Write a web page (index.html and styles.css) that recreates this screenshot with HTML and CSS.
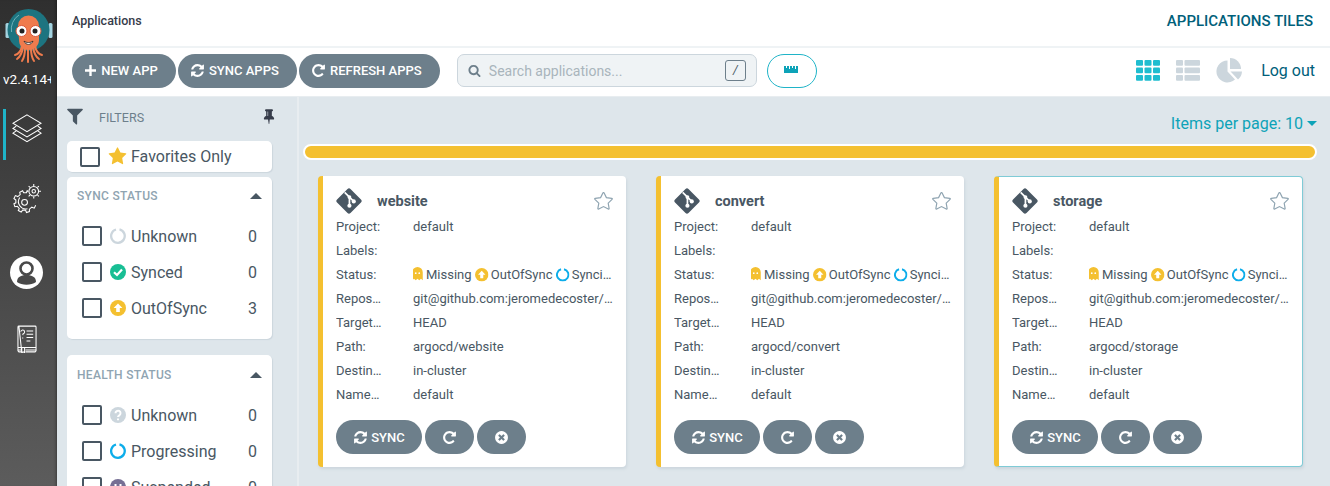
FILE: index.html
```html
<!DOCTYPE html>
<html lang="en">
<head>
    <meta charset="UTF-8">
    <title>Applications</title>
    <link rel="stylesheet" href="styles.css">
</head>
<body>
    <svg class="defs" width="0" height="0">
        <symbol id="i-sync" viewBox="0 0 1792 1792"><path d="M1639 1056q0 5-1 7-64 268-268 434.5t-478 166.5q-146 0-282.5-55t-243.5-157l-129 129q-19 19-45 19t-45-19-19-45v-448q0-26 19-45t45-19h448q26 0 45 19t19 45-19 45l-137 137q71 66 161 102t187 36q134 0 250-65t186-179q11-17 53-117 8-23 30-23h192q13 0 22.5 9.5t9.5 22.5zm25-800v448q0 26-19 45t-45 19h-448q-26 0-45-19t-19-45 19-45l138-138q-148-137-349-137-134 0-250 65t-186 179q-11 17-53 117-8 23-30 23h-199q-13 0-22.5-9.5t-9.5-22.5v-7q65-268 270-434.5t480-166.5q146 0 284 55.500t245 156.500l130-129q19-19 45-19t45 19 19 45z"/></symbol>
        <symbol id="i-repeat" viewBox="0 0 1792 1792"><path d="M1664 256v448q0 26-19 45t-45 19h-448q-42 0-59-40-17-39 14-69l138-138q-148-137-349-137-104 0-198.500 40.500t-163.500 109.500-109.500 163.500-40.500 198.500 40.500 198.500 109.500 163.500 163.500 109.500 198.500 40.500q119 0 225-52t179-147q7-10 23-12 15 0 25 9l137 138q9 8 9.500 20.500t-7.500 22.500q-109 132-264 204.500t-327 72.500q-156 0-298-61t-245-164-164-245-61-298 61-298 164-245 245-164 298-61q147 0 284.500 55.500t244.500 156.500l130-129q29-31 70-14 39 17 39 59z"/></symbol>
        <symbol id="i-times" viewBox="0 0 1792 1792"><path d="M1277 1122q0-26-19-45l-181-181 181-181q19-19 19-45 0-27-19-46l-90-90q-19-19-46-19-26 0-45 19l-181 181-181-181q-19-19-45-19-27 0-46 19l-90 90q-19 19-19 46 0 26 19 45l181 181-181 181q-19 19-19 45 0 27 19 46l90 90q19 19 46 19 26 0 45-19l181-181 181 181q19 19 45 19 27 0 46-19l90-90q19-19 19-46zm387-226q0 209-103 385.500t-279.500 279.500-385.500 103-385.500-103-279.500-279.500-103-385.500 103-385.500 279.500-279.500 385.500-103 385.500 103 279.500 279.500 103 385.500z"/></symbol>
        <symbol id="i-star" viewBox="0 0 1792 1792"><path d="M1728 647q0 22-26 48l-363 354 86 500q1 7 1 20 0 21-10.500 35.500t-30.500 14.500q-19 0-40-12l-449-236-449 236q-22 12-40 12-21 0-31.500-14.500t-10.500-35.500q0-6 2-20l86-500-364-354q-25-27-25-48 0-37 56-46l502-73 225-455q19-41 49-41t49 41l225 455 502 73q56 9 56 46z"/></symbol>
        <symbol id="i-git" viewBox="0 0 30 30"><path d="M13.3 1.2a2.4 2.4 0 0 1 3.4 0l12.100 12.100a2.400 2.400 0 0 1 0 3.400L16.700 28.800a2.400 2.400 0 0 1-3.400 0L1.200 16.700a2.400 2.400 0 0 1 0-3.400z"/><path d="M10 5l5.500 5.500v9M15.500 10.500l5 5" fill="none" stroke="#fff" stroke-width="2"/><circle cx="15.500" cy="10.500" r="2.200" fill="#fff"/><circle cx="15.500" cy="20.500" r="2.400" fill="#fff"/><circle cx="20.500" cy="15.500" r="2.400" fill="#fff"/></symbol>
        <symbol id="i-ghost" viewBox="0 0 12 16"><path d="M0 15V6a6 6 0 0 1 12 0v9l-2-1.500L8 15l-2-1.500L4 15l-2-1.500z"/><circle cx="4" cy="7" r="1" fill="#fff"/><circle cx="8" cy="7" r="1" fill="#fff"/></symbol>
        <symbol id="i-up" viewBox="0 0 16 16"><circle cx="8" cy="8" r="8" fill="#f4c030"/><path d="M8 3.400L12.400 8H9.800v4H6.200V8H3.600z" fill="#fff"/></symbol>
        <symbol id="i-ring" viewBox="0 0 16 16"><path d="M9.500 1.400A6.800 6.800 0 1 1 6 1.500" fill="none" stroke-width="2.300"/></symbol>
    </svg>

    <nav class="sidebar">
        <svg class="logo" viewBox="0 0 48 60">
            <rect x="0.500" y="17" width="4" height="15" rx="1.500" fill="#a4d3e0"/>
            <rect x="43.500" y="17" width="4" height="15" rx="1.500" fill="#a4d3e0"/>
            <circle cx="23.500" cy="24" r="21" fill="#1d7480"/>
            <path d="M6.500 26A17 17 0 0 1 14 9" fill="none" stroke="#6fb0b8" stroke-width="1"/>
            <g fill="none" stroke="#ef7b4d" stroke-width="2" stroke-linecap="round">
                <path d="M17 40c-1 5-3 8-7 9"/>
                <path d="M18 41c-1 6-3 10-6 12"/>
                <path d="M20 42c0 6-1 10-3 13"/>
                <path d="M23 42v14"/>
                <path d="M26 42c0 6 1 10 3 13"/>
                <path d="M28 41c1 6 3 10 6 12"/>
                <path d="M30 40c1 5 3 8 7 9"/>
            </g>
            <path d="M13 20a10.500 10.500 0 0 1 21 0v14c0 5-4 10-10.500 10S14 39 14 34z" fill="#ef7b4d"/>
            <circle cx="16.500" cy="25" r="5.500" fill="#fff" stroke="#d9593a"/>
            <circle cx="30.500" cy="25" r="5.500" fill="#fff" stroke="#d9593a"/>
            <circle cx="17" cy="25" r="2.500" fill="#222"/>
            <circle cx="30" cy="25" r="2.500" fill="#222"/>
            <path d="M19 35c2 2 7 2 9 0-1.500 4.500-7.500 4.500-9 0z" fill="#fff" stroke="#222" stroke-width=".8"/>
        </svg>
        <div class="version">v2.4.14+unknown</div>
        <a class="nav-item active">
            <svg class="nav-layers" viewBox="0 0 32 32" fill="none" stroke="#fff" stroke-width="1.100"><path d="M16 2L31 11 16 20 1 11z"/><path d="M4.500 14L1 16.500 16 25.500 31 16.500 27.500 14"/><path d="M4.500 19L1 21.500 16 30.500 31 21.500 27.500 19"/></svg>
        </a>
        <a class="nav-item">
            <svg class="nav-gear" viewBox="0 0 30 32" fill="none" stroke="#fff" stroke-width="1.100"><circle cx="22.500" cy="8.500" r="5"/><circle cx="22.500" cy="8.500" r="1.800"/><path d="M22.500 1v2M22.500 14v2M15 8.500h2M28 8.500h2M17.200 3.200l1.400 1.400M26.400 12.400l1.400 1.400M27.800 3.200l-1.400 1.400M18.600 12.400l-1.400 1.400"/><circle cx="13" cy="20" r="3"/><path d="M16 7.500l-1 2.500h-3l-1-2-3 1.500 .5 2.500-2.500 2-2.500-1-1.500 3 2 1.500v3l-2 1 1 3 2.500-.5 2 2.500-1 2 3 1.500 1.500-2h3l1 2.500 3-1v-2.500l2.500-2 2.500 1 1.500-3"/><path d="M8 15a7.500 7.500 0 0 0 8 11.500"/></svg>
        </a>
        <a class="nav-item">
            <svg class="nav-user" viewBox="0 0 33 33"><circle cx="16.500" cy="16.500" r="16.500" fill="#fff"/><circle cx="16.500" cy="12.500" r="6" fill="none" stroke="#494949" stroke-width="2.600"/><path d="M7 26c0-5 4-7 9.500-7s9.500 2 9.500 7c-5 3.500-14 3.500-19 0z" fill="#494949"/></svg>
        </a>
        <a class="nav-item">
            <svg class="nav-book" viewBox="0 0 21 29" fill="none" stroke="#fff" stroke-width="1.100"><path d="M2 1h17a1 1 0 0 1 1 1v25l-1 1H9M5 28H2l-1-1V2a1 1 0 0 1 1-1zM1 23.500h19M1 26h4M9 26h11M5 24v5l1.500-1 1.500 1v-5"/><path d="M4 7a2 2 0 1 1 2.500 2L6 10.500M6 13v1M10 6h7M10 9.500h7M10 13h7M10 16.500h4"/></svg>
        </a>
    </nav>

    <div class="page">
        <header class="top-bar">
            <span class="page-title">Applications</span>
            <span class="page-heading">APPLICATIONS TILES</span>
        </header>

        <div class="toolbar">
            <button class="btn btn-new"><svg class="plus" viewBox="0 0 12 12"><path d="M4.700 0h2.600v4.700H12v2.600H7.300V12H4.700V7.300H0V4.700h4.700z"/></svg>NEW APP</button>
            <button class="btn"><svg class="btn-icon"><use href="#i-sync"/></svg>SYNC APPS</button>
            <button class="btn btn-refresh"><svg class="btn-icon"><use href="#i-repeat"/></svg>REFRESH APPS</button>
            <div class="search">
                <svg class="search-icon" viewBox="0 0 1792 1792"><path d="M1216 832q0-185-131.500-316.500t-316.500-131.500-316.500 131.500-131.500 316.500 131.500 316.500 316.500 131.500 316.500-131.500 131.500-316.500zm512 832q0 52-38 90t-90 38q-54 0-90-38l-343-342q-179 124-399 124-143 0-273.500-55.500t-225-150-150-225-55.500-273.500 55.500-273.500 150-225 225-150 273.500-55.500 273.500 55.500 225 150 150 225 55.500 273.500q0 220-124 399l343 343q37 37 37 90z"/></svg>
                <span class="search-text">Search applications...</span>
                <span class="key">/</span>
            </div>
            <button class="ruler-btn"><svg viewBox="0 0 15 7" class="ruler"><path d="M0 0h2v2h1V0h2v3h1V0h2v2h1V0h2v3h1V0h2v7H0z"/></svg></button>
            <div class="views">
                <svg class="view" viewBox="0 0 24 21"><g class="cyan"><rect width="7" height="5.800" rx="1"/><rect x="8.500" width="7" height="5.800" rx="1"/><rect x="17" width="7" height="5.800" rx="1"/><rect y="7.500" width="7" height="5.800" rx="1"/><rect x="8.500" y="7.500" width="7" height="5.800" rx="1"/><rect x="17" y="7.500" width="7" height="5.800" rx="1"/><rect y="15" width="7" height="5.800" rx="1"/><rect x="8.500" y="15" width="7" height="5.800" rx="1"/><rect x="17" y="15" width="7" height="5.800" rx="1"/></g></svg>
                <svg class="view" viewBox="0 0 24 21"><rect width="7" height="5.800" rx="1"/><rect x="8.500" width="15.500" height="5.800" rx="1"/><rect y="7.500" width="7" height="5.800" rx="1"/><rect x="8.500" y="7.500" width="15.500" height="5.800" rx="1"/><rect y="15" width="7" height="5.800" rx="1"/><rect x="8.500" y="15" width="15.500" height="5.800" rx="1"/></svg>
                <svg class="view pie" viewBox="0 0 26 25"><path d="M11.500 2.500A11 11 0 1 0 19 21.500l-7.500-8z"/><path d="M14 0a11 11 0 0 1 11 11H14z"/><path d="M14.500 13.500H26a11 11 0 0 1-4 8z"/></svg>
                <span class="logout">Log out</span>
            </div>
        </div>

        <div class="content">
            <aside class="filters">
                <div class="filters-head">
                    <svg class="funnel" viewBox="0 0 1792 1792"><path d="M1595 295q17 41-14 70l-493 493v742q0 42-39 59-13 5-25 5-27 0-45-19l-256-256q-19-19-19-45v-486l-493-493q-31-29-14-70 17-39 59-39h1280q42 0 59 39z"/></svg>
                    <span class="filters-label">FILTERS</span>
                    <svg class="pin" viewBox="0 0 1792 1792"><path d="M800 864v-448q0-14-9-23t-23-9-23 9-9 23v448q0 14 9 23t23 9 23-9 9-23zm672 352q0 26-19 45t-45 19h-429l-51 483q-2 12-10.500 20.500t-20.500 8.500h-1q-27 0-32-27l-76-485h-404q-26 0-45-19t-19-45q0-123 78.500-221.500t177.500-98.500v-512q-52 0-90-38t-38-90 38-90 90-38h640q52 0 90 38t38 90-38 90-90 38v512q99 0 177.500 98.500t78.500 221.500z"/></svg>
                </div>
                <div class="favorites">
                    <span class="checkbox"></span>
                    <svg class="fav-star"><use href="#i-star"/></svg>
                    <span>Favorites Only</span>
                </div>
                <section class="filter-box sync-box">
                    <div class="box-title">SYNC STATUS<span class="caret"></span></div>
                    <div class="filter-row"><span class="checkbox"></span><svg class="state ring-grey"><use href="#i-ring"/></svg><span class="filter-name">Unknown</span><span>0</span></div>
                    <div class="filter-row"><span class="checkbox"></span><svg class="state" viewBox="0 0 16 16"><circle cx="8" cy="8" r="8" fill="#18be94"/><path d="M4 8.200l3 2.800 5-5.500" fill="none" stroke="#fff" stroke-width="2.200"/></svg><span class="filter-name">Synced</span><span>0</span></div>
                    <div class="filter-row"><span class="checkbox"></span><svg class="state"><use href="#i-up"/></svg><span class="filter-name">OutOfSync</span><span>3</span></div>
                </section>
                <section class="filter-box">
                    <div class="box-title">HEALTH STATUS<span class="caret"></span></div>
                    <div class="filter-row"><span class="checkbox"></span><svg class="state" viewBox="0 0 16 16"><circle cx="8" cy="8" r="8" fill="#ccd6dd"/><path d="M5.500 6.200a2.500 2.500 0 1 1 3.800 2.100C8.400 8.900 8 9.200 8 10M8 11.500v1.800" fill="none" stroke="#fff" stroke-width="2"/></svg><span class="filter-name">Unknown</span><span>0</span></div>
                    <div class="filter-row"><span class="checkbox"></span><svg class="state ring-blue"><use href="#i-ring"/></svg><span class="filter-name">Progressing</span><span>0</span></div>
                    <div class="filter-row"><span class="checkbox"></span><svg class="state" viewBox="0 0 16 16"><circle cx="8" cy="8" r="8" fill="#766f94"/><path d="M5.500 5v6M10.500 5v6" stroke="#fff" stroke-width="2"/></svg><span class="filter-name">Suspended</span><span>0</span></div>
                </section>
            </aside>

            <main class="apps">
                <div class="per-page">Items per page: 10<span class="caret-down"></span></div>
                <div class="health-bar"></div>
                <div class="cards">
                    <article class="card">
                        <div class="card-head">
                            <svg class="git"><use href="#i-git"/></svg>
                            <span class="card-name">website</span>
                            <svg class="card-star" viewBox="0 0 1792 1792"><use href="#i-star"/></svg>
                        </div>
                        <dl class="fields">
                            <dt>Project:</dt><dd>default</dd>
                            <dt>Labels:</dt><dd></dd>
                            <dt>Status:</dt><dd class="status"><svg class="ghost"><use href="#i-ghost"/></svg>Missing <svg class="mini"><use href="#i-up"/></svg>OutOfSync <svg class="mini ring-blue"><use href="#i-ring"/></svg>Syncing</dd>
                            <dt>Repository:</dt><dd>git@github.com:jeromedecoster/argocd-docker-github-actions.git</dd>
                            <dt>Target Revision:</dt><dd>HEAD</dd>
                            <dt>Path:</dt><dd>argocd/website</dd>
                            <dt>Destination:</dt><dd>in-cluster</dd>
                            <dt>Namespace:</dt><dd>default</dd>
                        </dl>
                        <div class="card-actions">
                            <button class="btn btn-sync"><svg class="btn-icon"><use href="#i-sync"/></svg>SYNC</button>
                            <button class="btn btn-round"><svg class="btn-icon"><use href="#i-repeat"/></svg></button>
                            <button class="btn btn-round"><svg class="btn-icon"><use href="#i-times"/></svg></button>
                        </div>
                    </article>
                    <article class="card">
                        <div class="card-head">
                            <svg class="git"><use href="#i-git"/></svg>
                            <span class="card-name">convert</span>
                            <svg class="card-star" viewBox="0 0 1792 1792"><use href="#i-star"/></svg>
                        </div>
                        <dl class="fields">
                            <dt>Project:</dt><dd>default</dd>
                            <dt>Labels:</dt><dd></dd>
                            <dt>Status:</dt><dd class="status"><svg class="ghost"><use href="#i-ghost"/></svg>Missing <svg class="mini"><use href="#i-up"/></svg>OutOfSync <svg class="mini ring-blue"><use href="#i-ring"/></svg>Syncing</dd>
                            <dt>Repository:</dt><dd>git@github.com:jeromedecoster/argocd-docker-github-actions.git</dd>
                            <dt>Target Revision:</dt><dd>HEAD</dd>
                            <dt>Path:</dt><dd>argocd/convert</dd>
                            <dt>Destination:</dt><dd>in-cluster</dd>
                            <dt>Namespace:</dt><dd>default</dd>
                        </dl>
                        <div class="card-actions">
                            <button class="btn btn-sync"><svg class="btn-icon"><use href="#i-sync"/></svg>SYNC</button>
                            <button class="btn btn-round"><svg class="btn-icon"><use href="#i-repeat"/></svg></button>
                            <button class="btn btn-round"><svg class="btn-icon"><use href="#i-times"/></svg></button>
                        </div>
                    </article>
                    <article class="card card-hover">
                        <div class="card-head">
                            <svg class="git"><use href="#i-git"/></svg>
                            <span class="card-name">storage</span>
                            <svg class="card-star" viewBox="0 0 1792 1792"><use href="#i-star"/></svg>
                        </div>
                        <dl class="fields">
                            <dt>Project:</dt><dd>default</dd>
                            <dt>Labels:</dt><dd></dd>
                            <dt>Status:</dt><dd class="status"><svg class="ghost"><use href="#i-ghost"/></svg>Missing <svg class="mini"><use href="#i-up"/></svg>OutOfSync <svg class="mini ring-blue"><use href="#i-ring"/></svg>Syncing</dd>
                            <dt>Repository:</dt><dd>git@github.com:jeromedecoster/argocd-docker-github-actions.git</dd>
                            <dt>Target Revision:</dt><dd>HEAD</dd>
                            <dt>Path:</dt><dd>argocd/storage</dd>
                            <dt>Destination:</dt><dd>in-cluster</dd>
                            <dt>Namespace:</dt><dd>default</dd>
                        </dl>
                        <div class="card-actions">
                            <button class="btn btn-sync"><svg class="btn-icon"><use href="#i-sync"/></svg>SYNC</button>
                            <button class="btn btn-round"><svg class="btn-icon"><use href="#i-repeat"/></svg></button>
                            <button class="btn btn-round"><svg class="btn-icon"><use href="#i-times"/></svg></button>
                        </div>
                    </article>
                </div>
            </main>
        </div>
    </div>
</body>
</html>
```

FILE: styles.css
```css
* {
    box-sizing: border-box;
}
html, body {
    height: 486px;
    margin: 0;
    overflow: hidden;
}
body {
    display: flex;
    background-color: #dee6eb;
    color: #495763;
    font-family: Roboto, sans-serif;
}
.defs {
    position: absolute;
}

/* sidebar */
.sidebar {
    flex: none;
    width: 57px;
    height: 486px;
    display: flex;
    flex-direction: column;
    align-items: center;
    padding-top: 6px;
    background: linear-gradient(to bottom, #2f2f2f, #5c5c5c);
    box-shadow: inset -3px 0 3px -2px rgba(0, 0, 0, 0.35);
}
.logo {
    width: 48px;
    height: 60px;
    flex: none;
}
.version {
    width: 48px;
    margin-top: 5px;
    align-self: flex-start;
    margin-left: 3px;
    color: #fff;
    font-size: 13.500px;
    line-height: 16px;
    white-space: nowrap;
    overflow: hidden;
}
.nav-item {
    width: 100%;
    display: flex;
    justify-content: center;
    align-items: center;
    flex: none;
    padding-right: 4px;
}
.nav-item.active {
    height: 51px;
    margin-top: 22px;
    margin-left: 3px;
    width: 54px;
    padding: 4px 0 0 6px;
    border-left: 3px solid #1fb4c8;
    justify-content: flex-start;
    align-items: flex-start;
}
.nav-layers {
    width: 30px;
    height: 30px;
}
.nav-gear {
    width: 29px;
    height: 31px;
    margin-top: 23px;
}
.nav-user {
    width: 33px;
    height: 33px;
    margin-top: 42px;
}
.nav-book {
    width: 20px;
    height: 28px;
    margin-top: 36px;
}

/* top */
.page {
    flex: 1;
    min-width: 0;
    display: flex;
    flex-direction: column;
}
.top-bar {
    height: 48px;
    flex: none;
    display: flex;
    justify-content: space-between;
    align-items: center;
    padding: 0 17px 6px 15px;
    background-color: #fff;
    border-bottom: 2px solid #eff3f5;
}
.page-title {
    font-size: 12.500px;
    font-weight: 500;
    color: #363c4a;
}
.page-heading {
    margin-top: 1px;
    font-size: 15px;
    font-weight: 500;
    color: #00607a;
}
.toolbar {
    height: 49px;
    flex: none;
    display: flex;
    align-items: center;
    gap: 2px;
    padding: 0 15px 3px;
    background-color: #fff;
    border-bottom: 1px solid #e8edf0;
}
.btn {
    height: 34px;
    border: none;
    border-radius: 17px;
    padding: 0 18px 0 12px;
    display: flex;
    align-items: center;
    justify-content: center;
    background-color: #6d7f8b;
    color: #fff;
    font-family: Roboto, sans-serif;
    font-size: 13px;
    font-weight: 500;
    cursor: pointer;
}
.btn-new {
    width: 104px;
    padding: 0 18px 0 13px;
}
.btn-refresh {
    width: 141px;
}
.btn-icon {
    width: 15px;
    height: 15px;
    margin-right: 4px;
    fill: #fff;
    flex: none;
}
.plus {
    width: 11px;
    height: 11px;
    margin-right: 5px;
    fill: #fff;
}
.search {
    width: 300px;
    height: 33px;
    margin-left: 15px;
    display: flex;
    align-items: center;
    padding: 0 10px 0 10px;
    background-color: #eff3f5;
    border: 1px solid #ccd6dd;
    border-radius: 7px;
}
.search-icon {
    width: 13px;
    height: 13px;
    fill: #6d7f8b;
    margin-right: 8px;
}
.search-text {
    flex: 1;
    font-size: 14px;
    color: #a9b5bc;
}
.key {
    width: 21px;
    height: 21px;
    border: 1px solid #6d7f8b;
    border-radius: 3px;
    font-size: 12px;
    font-style: italic;
    line-height: 19px;
    text-align: center;
    color: #495763;
}
.ruler-btn {
    width: 50px;
    height: 34px;
    margin-left: 8px;
    padding: 0;
    background-color: #fff;
    border: 1px solid #1fb4c8;
    border-radius: 17px;
}
.ruler {
    display: block;
    width: 15px;
    height: 7px;
    margin: 0 auto 3px;
    fill: #0da3b8;
}
.views {
    margin-left: auto;
    display: flex;
    align-items: center;
}
.view {
    width: 24px;
    height: 21px;
    margin-right: 16px;
    fill: #ccd6dd;
}
.view .cyan {
    fill: #1fbdd0;
}
.view.pie {
    width: 26px;
    height: 25px;
    margin-right: 19px;
}
.logout {
    font-size: 16px;
    color: #00607a;
}

/* filters */
.content {
    flex: 1;
    min-height: 0;
    display: flex;
    overflow: hidden;
}
.filters {
    width: 242px;
    flex: none;
    padding: 0 25px 0 10px;
    border-right: 2px solid #e8edf0;
}
.filters-head {
    height: 44px;
    display: flex;
    align-items: center;
    padding-bottom: 3px;
}
.funnel {
    width: 20px;
    height: 20px;
    margin-left: -2px;
    margin-top: -4px;
    fill: #495763;
}
.filters-label {
    margin-left: 14px;
    font-size: 12.500px;
    color: #6d7f8b;
}
.pin {
    width: 16px;
    height: 16px;
    margin-left: auto;
    margin-right: -5px;
    margin-top: -4px;
    fill: #363c4a;
}
.favorites {
    height: 31px;
    display: flex;
    align-items: center;
    padding-left: 13px;
    background-color: #fff;
    border-radius: 5px;
    box-shadow: 1px 1px 1px #ccd6dd;
    font-size: 16px;
}
.checkbox {
    width: 20px;
    height: 20px;
    flex: none;
    background-color: #fff;
    border: 2px solid #495763;
    border-radius: 2px;
}
.fav-star {
    width: 19px;
    height: 19px;
    margin: 0 4px 0 8px;
    fill: #f4c030;
}
.filter-box {
    margin-top: 5px;
    height: 162px;
    padding: 0 10px 0 15px;
    background-color: #fff;
    border-radius: 5px;
    box-shadow: 1px 1px 1px #ccd6dd;
    font-size: 16px;
}
.sync-box + .filter-box {
    margin-top: 16px;
    height: 200px;
    padding-top: 1px;
}
.box-title {
    height: 37px;
    margin-left: -5px;
    margin-bottom: 4px;
    display: flex;
    justify-content: space-between;
    align-items: center;
    color: #8fa4b1;
    font-size: 12px;
    font-weight: 500;
    letter-spacing: 0.3px;
}
.caret {
    margin-right: 0;
    border-left: 6px solid transparent;
    border-right: 6px solid transparent;
    border-bottom: 6px solid #495763;
}
.filter-row {
    height: 36px;
    display: flex;
    align-items: center;
    padding-right: 5px;
}
.state {
    width: 16px;
    height: 16px;
    margin: 0 5px 0 8px;
    flex: none;
    overflow: visible;
}
.ring-grey {
    stroke: #ccd6dd;
}
.ring-blue {
    stroke: #0dadea;
}
.filter-name {
    flex: 1;
}

/* apps */
.apps {
    flex: 1;
    min-width: 0;
    padding: 0 13px 0 4px;
}
.per-page {
    height: 48px;
    display: flex;
    justify-content: flex-end;
    align-items: center;
    padding-top: 4px;
    color: #0da3b8;
    font-size: 16px;
}
.caret-down {
    margin-left: 4px;
    border-left: 5px solid transparent;
    border-right: 5px solid transparent;
    border-top: 5px solid #0da3b8;
}
.health-bar {
    height: 16px;
    margin-top: -1px;
    background-color: #f4c030;
    border: 2px solid #fff;
    border-radius: 8px;
}
.cards {
    display: grid;
    grid-template-columns: 308px 308px 309px;
    gap: 30px;
    margin: 16px 0 0 15px;
}
.card {
    height: 291px;
    padding: 11px 13px 0 13px;
    background-color: #fff;
    border-left: 5px solid #f4c030;
    border-radius: 4px;
    box-shadow: 1px 2px 3px #ccd6dd;
}
.card-hover {
    border-top: 1px solid #7fcbd6;
    border-right: 1px solid #7fcbd6;
    border-bottom: 1px solid #7fcbd6;
    padding-top: 10px;
}
.card-head {
    height: 28px;
    display: flex;
    align-items: center;
}
.git {
    width: 26px;
    height: 26px;
    fill: #495763;
    flex: none;
}
.card-name {
    margin-left: 15px;
    font-size: 14.500px;
    font-weight: 700;
}
.card-star {
    width: 19px;
    height: 19px;
    margin-left: auto;
    fill: none;
    stroke: #8fa4b1;
    stroke-width: 110px;
}
.fields {
    margin: 0;
    display: grid;
    grid-template-columns: 48px 1fr;
    grid-auto-rows: 24px;
    column-gap: 29px;
    font-size: 13px;
    line-height: 24px;
}
.fields dt,
.fields dd {
    margin: 0;
    min-width: 0;
    white-space: nowrap;
    overflow: hidden;
    text-overflow: ellipsis;
}
.ghost {
    width: 11px;
    height: 14px;
    margin: 0 3px 0 -1px;
    vertical-align: -2px;
    fill: #f4c030;
}
.mini {
    width: 13.500px;
    height: 13.500px;
    margin: 0 2.500px 0 0;
    vertical-align: -2px;
    overflow: visible;
}
.card-actions {
    display: flex;
    gap: 3px;
    margin-top: 13px;
}
.btn-sync {
    width: 86px;
    padding: 0;
}
.btn-sync .btn-icon {
    margin-right: 3px;
}
.btn-round {
    width: 49px;
    padding: 0;
}
.btn-round .btn-icon {
    margin: 0;
}
```
